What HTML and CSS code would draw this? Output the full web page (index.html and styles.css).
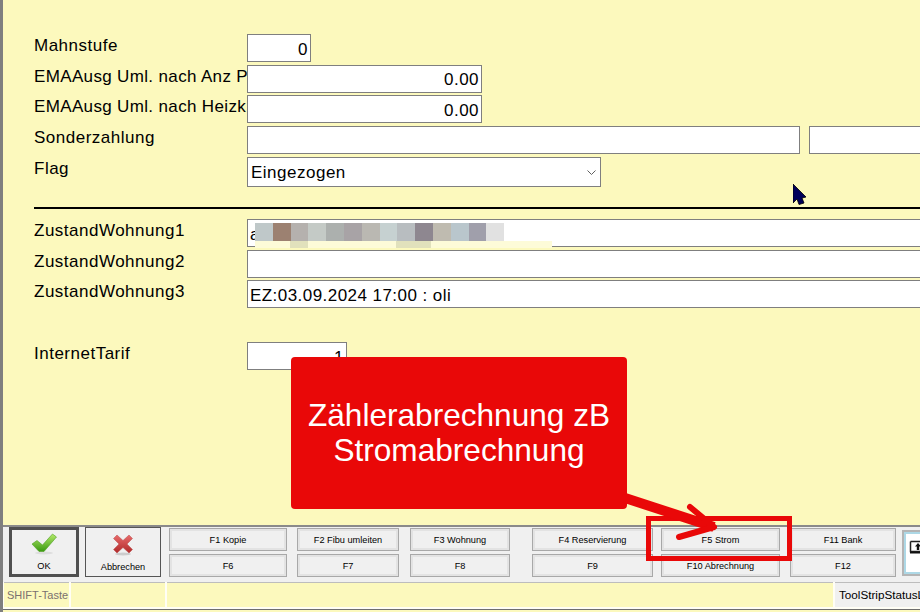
FILE: index.html
```html
<!DOCTYPE html>
<html lang="de">
<head>
<meta charset="utf-8">
<title>Zählerabrechnung</title>
<link rel="stylesheet" href="styles.css">
</head>
<body>
<div class="app">
  <main class="form">
    <section class="group group-a">
      <div class="row"><label class="lbl">Mahnstufe</label><input class="field num w-s" value="0" readonly></div>
      <div class="row"><label class="lbl tight">EMAAusg Uml. nach Anz P</label><input class="field num w-m" value="0.00" readonly></div>
      <div class="row"><label class="lbl tight">EMAAusg Uml. nach Heizk</label><input class="field num w-m" value="0.00" readonly></div>
      <div class="row"><label class="lbl">Sonderzahlung</label><input class="field w-l" readonly><input class="field extra" readonly></div>
      <div class="row"><label class="lbl">Flag</label>
        <div class="select"><span>Eingezogen</span>
          <svg class="chev" width="9" height="6" viewBox="0 0 9 6"><path d="M.5.5 4.500 4.500 8.500.5" fill="none" stroke="#606060"/></svg>
        </div>
      </div>
    </section>
    <hr class="sep">
    <section class="group group-b">
      <div class="row"><label class="lbl">ZustandWohnung1</label><input class="field w-x" value="a" readonly></div>
      <div class="row"><label class="lbl">ZustandWohnung2</label><input class="field w-x" readonly></div>
      <div class="row"><label class="lbl">ZustandWohnung3</label><input class="field w-x" value="EZ:03.09.2024 17:00 : oli" readonly></div>
    </section>
    <section class="group group-c">
      <div class="row"><label class="lbl">InternetTarif</label><input class="field num w-t" value="1" readonly></div>
    </section>
  </main>

  <div class="toolbar">
    <button class="action ok">
      <svg class="aicon" width="28" height="22" viewBox="0 0 28 22">
        <defs><linearGradient id="g" x1="0" y1="0" x2="0" y2="1"><stop offset="0" stop-color="#b4ea6a"/><stop offset="1" stop-color="#3a9a10"/></linearGradient></defs>
        <ellipse cx="14" cy="20" rx="9" ry="1.500" fill="#ddd"/>
        <path d="M2 11 7 7.500 12.500 12 22.500 1 26.500 4 14 18.500 9 18.500Z" fill="url(#g)" stroke="#4f9f22" stroke-width=".6"/>
      </svg>
      <span>OK</span>
    </button>
    <button class="action cancel">
      <svg class="aicon" width="28" height="22" viewBox="0 0 28 22">
        <defs><linearGradient id="r" x1="0" y1="0" x2="0" y2="1"><stop offset="0" stop-color="#e86a6a"/><stop offset="1" stop-color="#b02a2a"/></linearGradient></defs>
        <ellipse cx="14" cy="20" rx="8" ry="1.500" fill="#ccc"/>
        <path d="M8 1 14 6.500 20 1 23.500 4.500 18 10 23.500 15.500 20 19 14 13.500 8 19 4.500 15.500 10 10 4.500 4.500Z" fill="url(#r)" stroke="#b84a4a" stroke-width=".5"/>
      </svg>
      <span>Abbrechen</span>
    </button>
    <div class="fcol c1"><button class="fkey">F1 Kopie</button><button class="fkey">F6</button></div>
    <div class="fcol c2"><button class="fkey">F2 Fibu umleiten</button><button class="fkey">F7</button></div>
    <div class="fcol c3"><button class="fkey">F3 Wohnung</button><button class="fkey">F8</button></div>
    <div class="fcol c4"><button class="fkey">F4 Reservierung</button><button class="fkey">F9</button></div>
    <div class="fcol c5"><button class="fkey">F5 Strom</button><button class="fkey">F10 Abrechnung</button></div>
    <div class="fcol c6"><button class="fkey">F11 Bank</button><button class="fkey">F12</button></div>
    <div class="imgbtn">
      <div class="imgbtn-in">
        <svg width="16" height="15" viewBox="0 0 16 15">
          <path d="M1.500 1.500H16M1.500 1.500V11.500H16" fill="none" stroke="#222" stroke-width="1.500"/>
          <path d="M1 12.500H16" stroke="#111" stroke-width="2"/>
          <path d="M9 3 12 6.500H10.200V10H7.800V6.500H6Z" fill="#111"/>
        </svg>
      </div>
    </div>
  </div>

  <footer class="status">
    <div class="pane p1">SHIFT-Taste</div>
    <div class="pane p2"></div>
    <div class="pane p3"></div>
    <div class="pane p4">ToolStripStatusLabel</div>
  </footer>
</div>

<div class="blur">
  <div class="tiles">
    <i class="t t1"></i><i class="t t2"></i><i class="t t3"></i><i class="t t4"></i><i class="t t5"></i><i class="t t6"></i><i class="t t7"></i><i class="t t8"></i><i class="t t9"></i><i class="t t10"></i><i class="t t11"></i><i class="t t12"></i><i class="t t13"></i><i class="t t14"></i>
  </div>
  <div class="strip"><i class="s s1"></i><i class="s s2"></i></div>
</div>

<svg class="cursor" width="14" height="21" viewBox="0 0 14 21"><path d="M0 0 13 13 9 14 11 19 6 20.500 4 15 0 19Z" fill="#00005a" stroke="#000" stroke-width=".8"/></svg>

<div class="callout">Zählerabrechnung zB<br>Stromabrechnung</div>
<div class="redbox"></div>
<svg class="arrow" width="110" height="60" viewBox="0 0 110 60">
  <path d="M0 7 92 37" stroke="#e90808" stroke-width="10" fill="none"/>
  <path d="M68 17 92 37 57 47" stroke="#e90808" stroke-width="6" fill="none" stroke-linecap="round" stroke-linejoin="round"/>
</svg>
</body>
</html>
```

FILE: styles.css
```css
* { box-sizing: border-box; }
html, body { margin: 0; padding: 0; }
body {
  width: 920px; height: 612px; overflow: hidden; position: relative;
  font-family: "Liberation Sans", Arial, sans-serif; color: #000; background: #fcf9bd;
}
.app { display: flex; flex-direction: column; width: 920px; height: 612px; border-left: 3px solid #7f7f7f; }

.form { height: 525px; padding: 34px 0 0 31px; background: #fcf9bd; overflow: hidden; font-size: 17px; letter-spacing: .5px; }
.row { display: flex; align-items: flex-start; height: 30.67px; }
.group-b .row { height: 30.4px; }
.lbl { flex: 0 0 213px; width: 213px; overflow: hidden; white-space: nowrap; padding-top: 2px; line-height: 20px; }
.tight { letter-spacing: .35px; }
.field {
  height: 28px; padding: 3px 2px 0 2px; border: 1px solid #7f7f7f; background: #fff; outline: 0; border-radius: 0;
  font: inherit; letter-spacing: .45px; color: #000; flex: none;
}
.num { text-align: right; }
.w-s { width: 64px; }
.w-m { width: 235px; }
.w-l { width: 553px; }
.extra { width: 200px; margin-left: 9px; }
.w-x { width: 720px; }
.w-t { width: 100px; }
.select {
  width: 354px; height: 30px; border: 1px solid #7f7f7f; background: #fff; display: flex; align-items: center;
  justify-content: space-between; padding: 2px 4px 0 3px; flex: none;
}
.sep { height: 2px; margin: 20px 0 10px; border: 0; background: #000; }
.group-c { margin-top: 31.8px; }

.toolbar {
  height: 57px; flex: none; display: flex; align-items: flex-start; border-top: 2px solid #8a8a8a; background: #f0f0f0;
  padding-left: 6px; font-size: 9.2px; overflow: hidden;
}
button { font: inherit; color: #000; padding: 0; margin: 0; cursor: default; }
.action { height: 50px; background: #f0f0f0; display: flex; flex-direction: column; align-items: center; flex: none; }
.aicon { display: block; }
.ok { width: 70px; border: 3px solid #505050; padding-top: 3px; }
.ok span { margin-top: 6px; }
.cancel { width: 76px; margin-left: 6px; border: 1px solid #555; padding-top: 6px; }
.cancel span { margin-top: 6px; }
.fcol { display: flex; flex-direction: column; gap: 3px; flex: none; padding-top: 1px; }
.fkey { height: 23px; background: #f0f0f0; border: 1px solid #a8a8a8; box-shadow: inset 0 0 0 2px #e3e3e3; }
.c1 { width: 118px; margin-left: 8px; }
.c2 { width: 102px; margin-left: 10px; }
.c3 { width: 100px; margin-left: 11px; }
.c4 { width: 121px; margin-left: 22px; }
.c5 { width: 119px; margin-left: 8px; }
.c6 { width: 106px; margin-left: 10px; }
.imgbtn { width: 30px; height: 46px; margin: 3px 0 0 6px; border: 2px solid #b4b4b4; background: #add8e6; padding: 2px; flex: none; }
.imgbtn-in { height: 100%; background: #fff; padding: 6px 0 0 3px; }
.imgbtn-in svg { display: block; }

.status { flex: none; height: 28px; display: flex; gap: 2px; background: #fffef5; padding-left: 1px; font-size: 11px; border-bottom: 1px solid #6e6e6e; }
.pane { height: 25px; background: #fcf9bd; border-top: 1px solid #bdbdbd; line-height: 24px; white-space: nowrap; overflow: hidden; }
.p1 { width: 65px; padding-left: 3px; color: #7a7070; font-size: 11px; }
.p2 { width: 94px; }
.p3 { width: 666px; }
.p4 { flex: 1; background: #f0f0f0; padding-left: 4px; font-size: 11.7px; }

.blur { position: absolute; left: 255px; top: 223px; width: 297px; }
.tiles { display: flex; height: 18px; }
.t { width: 17.8px; flex: none; }
.t1 { background: #bfc8c9; } .t2 { background: #9c8171; } .t3 { background: #b5b1ae; } .t4 { background: #c4cac6; }
.t5 { background: #acb0ae; } .t6 { background: #a8a3a6; } .t7 { background: #bab8b2; } .t8 { background: #c6d1d1; }
.t9 { background: #b8bdc0; } .t10 { background: #8e8790; } .t11 { background: #bfbbb0; } .t12 { background: #b9c6cc; }
.t13 { background: #a09fab; } .t14 { background: #e1e1e1; }
.strip { position: relative; height: 7px; background: #fdfbd8; }
.s { position: absolute; top: 0; height: 7px; background: #e1e1bc; }
.s1 { left: 35px; width: 18px; }
.s2 { left: 141px; width: 35px; }

.cursor { position: absolute; left: 793px; top: 184px; }
.callout {
  position: absolute; left: 291px; top: 357px; width: 336px; height: 152px; border-radius: 4px; background: #e90808; color: #fff;
  font-size: 31.6px; line-height: 35px; text-align: center; padding-top: 41px;
}
.redbox { position: absolute; left: 646px; top: 516px; width: 146px; height: 45px; border: 5px solid #e90808; }
.arrow { position: absolute; left: 622px; top: 490px; }
```
